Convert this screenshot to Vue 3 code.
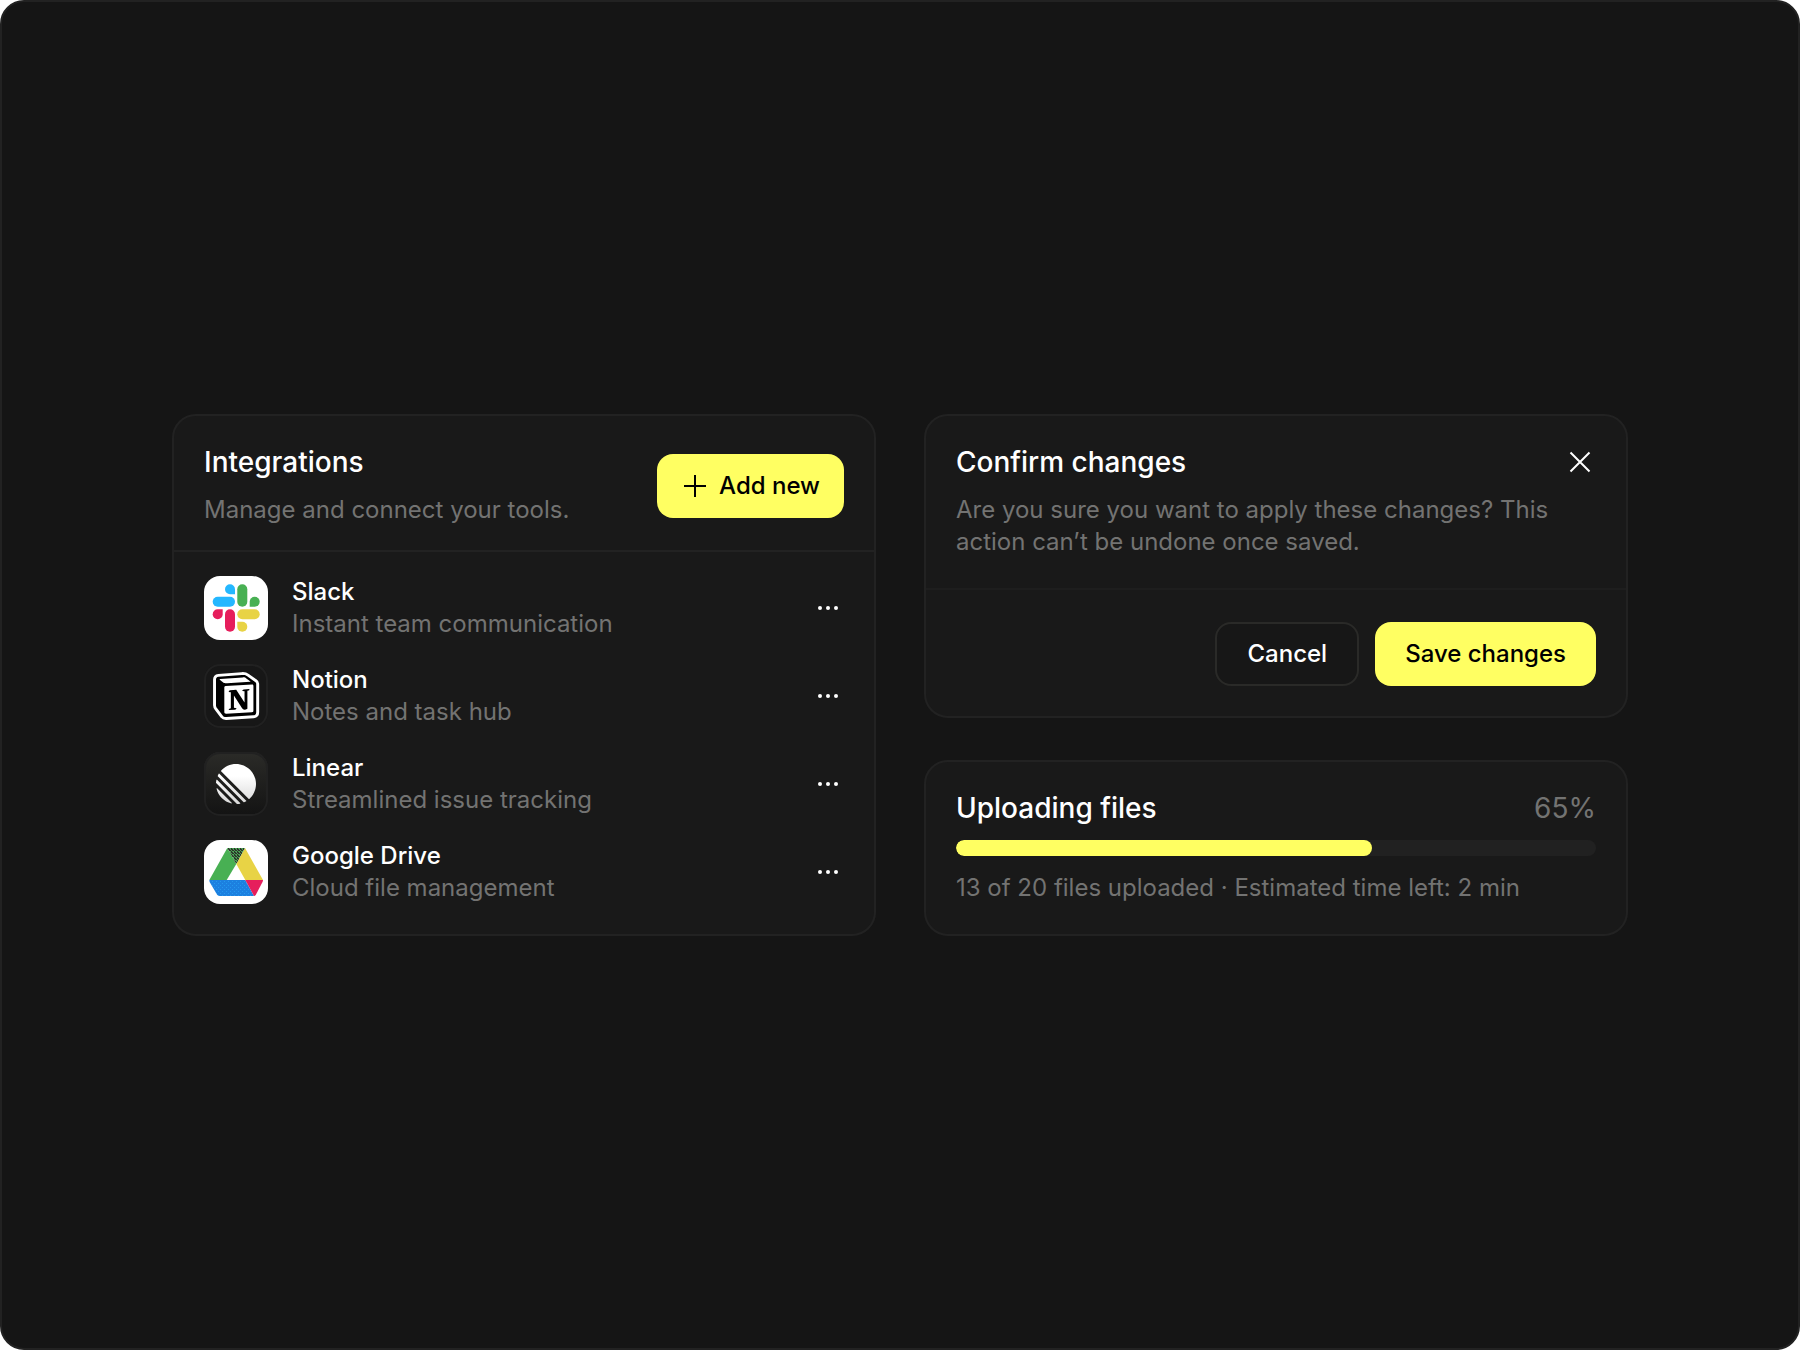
<template>
  <main class="frame">
    <div class="board">
      <section class="card" aria-labelledby="integrations-title">
        <header class="card-header card-header-center">
          <div class="heading">
            <h2 id="integrations-title">Integrations</h2>
            <p>Manage and connect your tools.</p>
          </div>
          <button type="button" class="btn btn-primary btn-icon">
            <svg width="24" height="24" viewBox="0 0 24 24" aria-hidden="true">
              <path d="M12 1v22M1 12h22" stroke="currentColor" stroke-width="2" />
            </svg>
            Add new
          </button>
        </header>

        <ul class="list">
          <li v-for="item in integrations" :key="item.id" class="row">
            <span class="logo" :class="'logo-' + item.id">
              <svg v-if="item.id === 'slack'" viewBox="0 0 64 64" aria-hidden="true">
                <g fill="#24b7ff">
                  <path d="M31 18.3h-5a5 5 0 1 1 5-5z" />
                  <rect x="8.7" y="20.7" width="22.3" height="10" rx="5" />
                </g>
                <g fill="#48b053">
                  <rect x="33.3" y="8.3" width="10" height="22.4" rx="5" />
                  <path d="M45.7 30.7v-5a5 5 0 1 1 5 5z" />
                </g>
                <g fill="#e61e5c">
                  <path d="M18.7 33.3v5a5 5 0 1 1-5-5z" />
                  <rect x="21" y="33.3" width="10" height="22.4" rx="5" />
                </g>
                <g fill="#e8d345">
                  <rect x="33.3" y="33.3" width="22.4" height="10" rx="5" />
                  <path d="M33.3 45.7h5a5 5 0 1 1-5 5z" />
                </g>
              </svg>

              <svg v-else-if="item.id === 'notion'" viewBox="0 0 64 64" aria-hidden="true">
                <g transform="translate(12 11) scale(.42)">
                  <path
                    fill="#fff"
                    stroke="#fff"
                    stroke-width="14"
                    stroke-linejoin="round"
                    d="M6.017 4.313l55.333-4.087c6.797-.583 8.543-.19 12.817 2.917l17.663 12.443c2.913 2.14 3.883 2.723 3.883 5.053v68.243c0 4.277-1.553 6.807-6.99 7.193L24.467 99.967c-4.08.193-6.023-.39-8.16-3.113L3.3 79.94C.967 76.827 0 74.497 0 71.773v-60.66c0-3.497 1.553-6.413 6.017-6.8z"
                  />
                  <path
                    fill="#000"
                    fill-rule="evenodd"
                    d="M61.35.227l-55.333 4.087C1.553 4.7 0 7.617 0 11.113v60.66c0 2.723.967 5.053 3.3 8.167l13.007 16.913c2.137 2.723 4.08 3.307 8.16 3.113l64.257-3.89c5.433-.387 6.99-2.917 6.99-7.193V20.64c0-2.21-.873-2.847-3.443-4.733L74.167 3.143C69.893.037 68.147-.357 61.35.227zM25.92 19.523c-5.247.353-6.437.433-9.417-1.99L8.927 11.507c-.77-.78-.383-1.753 1.557-1.947l53.193-3.887c4.467-.39 6.793 1.167 8.54 2.527l9.123 6.61c.39.197 1.36 1.36.193 1.36L26.6 19.477zM19.803 88.3V30.367c0-2.53.777-3.697 3.103-3.893L86 22.78c2.14-.193 3.107 1.167 3.107 3.693v57.547c0 2.53-.39 4.67-3.883 4.863l-60.377 3.5c-3.493.193-5.043-.97-5.043-4.083zM79.403 33.473c.387 1.75 0 3.5-1.75 3.7l-2.91.577v42.773c-2.527 1.36-4.853 2.137-6.797 2.137-3.107 0-3.883-.973-6.21-3.887l-19.03-29.94v28.967l6.02 1.363s0 3.5-4.857 3.5l-13.39.777c-.39-.78 0-2.723 1.357-3.11l3.497-.97v-38.3l-4.853-.393c-.39-1.75.58-4.277 3.3-4.473l14.367-.967 19.8 30.327v-26.83l-5.047-.58c-.39-2.143 1.163-3.7 3.103-3.89z"
                  />
                </g>
              </svg>

              <svg v-else-if="item.id === 'linear'" viewBox="0 0 64 64" aria-hidden="true">
                <defs>
                  <linearGradient id="linear-ball" x1="0" y1="0" x2="0" y2="1">
                    <stop offset=".3" stop-color="#fff" />
                    <stop offset="1" stop-color="#d8d8d8" />
                  </linearGradient>
                </defs>
                <path
                  transform="translate(12 12) scale(.4)"
                  fill="url(#linear-ball)"
                  d="M1.225 61.523c-.222-.949.908-1.546 1.597-.857l36.512 36.512c.689.689.092 1.819-.857 1.597C20.052 94.452 5.548 79.949 1.225 61.523zM.002 46.889c-.018.283.089.56.29.761l52.058 52.059c.2.2.477.307.761.289 2.369-.148 4.694-.46 6.962-.926.765-.157 1.03-1.096.478-1.648L2.576 39.449c-.552-.552-1.491-.287-1.648.478-.466 2.268-.778 4.593-.926 6.962zM4.211 29.705c-.166.374-.082.811.208 1.1l64.776 64.776c.289.29.726.374 1.1.208 1.786-.796 3.517-1.693 5.185-2.684.552-.328.637-1.087.183-1.541L8.436 24.337c-.454-.454-1.213-.369-1.541.183-.991 1.669-1.888 3.399-2.684 5.185zM12.659 18.074c-.37-.37-.393-.964-.045-1.354C21.78 6.459 35.111 0 49.952 0 77.593 0 100 22.407 100 50.048c0 14.841-6.459 28.172-16.72 37.338-.39.348-.984.326-1.354-.045z"
                />
              </svg>

              <svg v-else viewBox="0 0 64 64" aria-hidden="true">
                <defs>
                  <pattern id="drive-hatch" width="3" height="3" patternUnits="userSpaceOnUse">
                    <rect width="3" height="3" fill="#48a053" />
                    <path d="M0 0h2v1H0zM1 1h2v1H1zM0 2h1v1H0z" fill="#2c352b" />
                  </pattern>
                  <pattern id="drive-dots" width="4" height="4" patternUnits="userSpaceOnUse">
                    <rect width="4" height="4" fill="#1c80e0" />
                    <path d="M0 1h1v1H0zM2 3h1v1H2z" fill="#2498ee" />
                  </pattern>
                </defs>
                <path d="M23.3 8L5.3 40h17.4l9.6-16z" fill="#48b053" />
                <path d="M41 8l18 32H41.3l-9-16z" fill="#e8d345" />
                <path d="M23.3 8H41l-8.7 16z" fill="url(#drive-hatch)" />
                <path d="M5.3 40h36L50 56H16q-2 0-3-1.5L5.6 42z" fill="url(#drive-dots)" />
                <path d="M41.3 40H59q0 1-.5 2L52 54.5Q51 56 50 56z" fill="#e61e5c" />
              </svg>
            </span>
            <div class="row-text">
              <h3>{{ item.name }}</h3>
              <p>{{ item.description }}</p>
            </div>
            <button type="button" class="icon-btn" :aria-label="'Options for ' + item.name">
              <svg width="32" height="32" viewBox="0 0 32 32" fill="currentColor" aria-hidden="true">
                <circle cx="8" cy="16" r="2" />
                <circle cx="16" cy="16" r="2" />
                <circle cx="24" cy="16" r="2" />
              </svg>
            </button>
          </li>
        </ul>
      </section>

      <div class="column">
        <section class="card" role="dialog" aria-labelledby="confirm-title">
          <header class="card-header card-header-dialog">
            <div class="heading">
              <h2 id="confirm-title">Confirm changes</h2>
              <p>Are you sure you want to apply these changes? This action can’t be undone once saved.</p>
            </div>
            <button type="button" class="icon-btn" aria-label="Close">
              <svg width="32" height="32" viewBox="0 0 32 32" aria-hidden="true">
                <path d="M6.5 6.5l19 19M25.5 6.5l-19 19" stroke="currentColor" stroke-width="2" />
              </svg>
            </button>
          </header>
          <footer class="card-footer">
            <button type="button" class="btn btn-outline">Cancel</button>
            <button type="button" class="btn btn-primary">Save changes</button>
          </footer>
        </section>

        <section class="card upload" aria-labelledby="upload-title">
          <div class="upload-title">
            <h2 id="upload-title">Uploading files</h2>
            <span class="percent">{{ progress }}%</span>
          </div>
          <div
            class="track"
            role="progressbar"
            aria-labelledby="upload-title"
            aria-valuemin="0"
            aria-valuemax="100"
            :aria-valuenow="progress"
          >
            <div class="fill" :style="{ width: progress + '%' }"></div>
          </div>
          <p>{{ uploaded }} of {{ total }} files uploaded · Estimated time left: 2 min</p>
        </section>
      </div>
    </div>
  </main>
</template>

<script setup>
import { ref, computed } from 'vue'

const integrations = [
  { id: 'slack', name: 'Slack', description: 'Instant team communication' },
  { id: 'notion', name: 'Notion', description: 'Notes and task hub' },
  { id: 'linear', name: 'Linear', description: 'Streamlined issue tracking' },
  { id: 'drive', name: 'Google Drive', description: 'Cloud file management' }
]

const uploaded = ref(13)
const total = ref(20)
const progress = computed(() => Math.round((uploaded.value / total.value) * 100))
</script>

<style>
body {
  margin: 0;
  background: #fff;
}
</style>

<style scoped>
.frame {
  box-sizing: border-box;
  min-height: calc(100vh - 1px);
  padding: 40px 170px;
  display: flex;
  align-items: center;
  background: #151515;
  border: 2px solid #222;
  border-radius: 24px;
  color: #fff;
  font-family: Inter, "Liberation Sans", sans-serif;
  font-size: 24px;
  line-height: 32px;
}

.board {
  flex: 1;
  display: grid;
  grid-template-columns: repeat(2, minmax(0, 1fr));
  gap: 48px;
}

.column {
  display: flex;
  flex-direction: column;
  gap: 42px;
}

.card {
  background: #191919;
  border: 2px solid #222;
  border-radius: 24px;
}

h2,
h3,
p,
ul {
  margin: 0;
  padding: 0;
}

h2 {
  font-size: 28px;
  font-weight: 500;
}

h3 {
  font-size: 24px;
  font-weight: 500;
}

p {
  color: #737372;
}

.card-header {
  display: flex;
  justify-content: space-between;
  align-items: flex-start;
  gap: 4px;
  padding: 30px 30px 24px;
  border-bottom: 2px solid #222;
}

.card-header-center {
  align-items: center;
}

.card-header-dialog {
  padding-bottom: 30px;
  border-bottom-color: #1e1e1e;
}

.heading {
  display: flex;
  flex-direction: column;
  gap: 16px;
}

.card-footer {
  display: flex;
  justify-content: flex-end;
  gap: 16px;
  padding: 32px 30px 30px;
}

.btn {
  box-sizing: border-box;
  height: 64px;
  padding: 0 30px;
  border: none;
  border-radius: 16px;
  font: inherit;
  font-weight: 500;
  white-space: nowrap;
  cursor: pointer;
}

.btn-primary {
  background: #ffff62;
  color: #000;
}

.btn-outline {
  background: #171717;
  border: 2px solid #2a2a28;
  color: #fff;
}

.btn-icon {
  display: flex;
  align-items: center;
  gap: 12px;
  padding: 0 24px 0 26px;
}

.icon-btn {
  flex: none;
  width: 32px;
  height: 32px;
  padding: 0;
  border: none;
  background: none;
  color: #fff;
  cursor: pointer;
}

.icon-btn svg {
  display: block;
}

.list {
  list-style: none;
  display: flex;
  flex-direction: column;
  gap: 24px;
  padding: 24px 30px 30px;
}

.row {
  display: flex;
  align-items: center;
  gap: 24px;
}

.row-text {
  flex: 1;
}

.logo {
  flex: none;
  width: 64px;
  height: 64px;
  border-radius: 16px;
  background: #fff;
}

.logo svg {
  display: block;
  width: 64px;
  height: 64px;
}

.logo-notion {
  background: #171717;
  box-shadow: inset 0 0 0 2px #212121;
}

.logo-linear {
  background: linear-gradient(#2b2b28, #131313);
  box-shadow: inset 0 0 0 2px #212121;
}

.upload {
  display: flex;
  flex-direction: column;
  gap: 16px;
  padding: 30px;
}

.upload-title {
  display: flex;
  justify-content: space-between;
  font-size: 28px;
}

.percent {
  color: #737372;
}

.track {
  height: 16px;
  border-radius: 8px;
  background: #212121;
  overflow: hidden;
}

.fill {
  height: 100%;
  border-radius: 8px;
  background: #ffff62;
}
</style>
